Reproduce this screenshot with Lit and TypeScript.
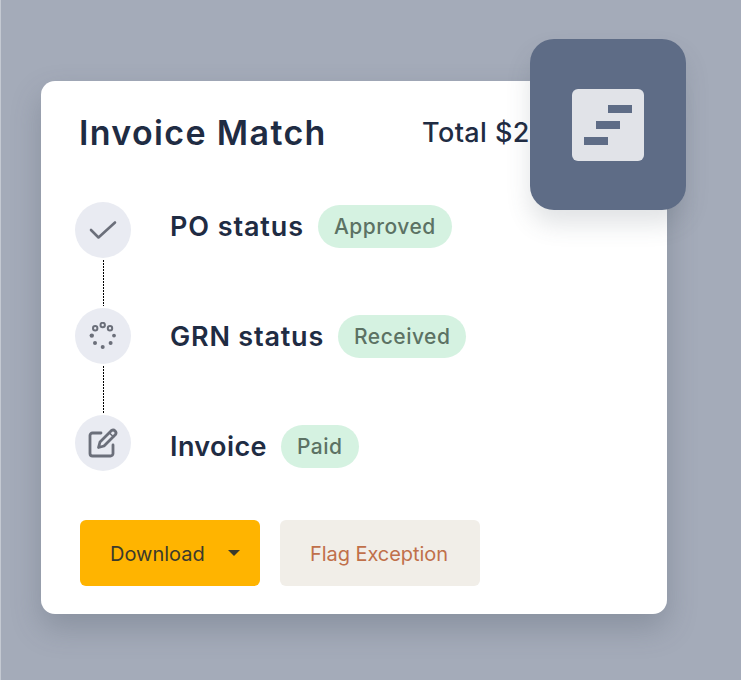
import { LitElement, html, css } from "lit";
import { customElement } from "lit/decorators.js";

@customElement("app-root")
export class AppRoot extends LitElement {
  static styles = css`
    :host { display: block; width: 741px; height: 680px; overflow: hidden; background: #a4abb9; font-family: "Inter", "Liberation Sans", sans-serif; box-sizing: border-box; border-left: 1px solid #c4c9d2; padding: 81px 0 0 40px; }
    .card { position: relative; box-sizing: border-box; width: 626px; height: 533px; background: #fff; border-radius: 14px; padding: 29px 38px 28px 38px; box-shadow: 0 14px 30px rgba(70, 78, 95, 0.28); display: flex; flex-direction: column; }
    .head { display: flex; align-items: center; height: 44px; white-space: nowrap; }
    h1 { margin: 0; font-size: 34px; font-weight: 600; color: #1f2c43; letter-spacing: 1.35px; width: 344px; }
    .total { font-size: 27px; font-weight: 500; color: #1f2c43; letter-spacing: 0.4px; margin-left: -1px; }
    .tile { position: absolute; left: 489px; top: -42px; width: 156px; height: 171px; border-radius: 24px; background: #5e6c86; box-shadow: 0 14px 24px rgba(70,78,95,.16); display: flex; align-items: center; justify-content: center; }
    .tile-inner { width: 72px; height: 72px; border-radius: 6px; background: #e1e3e8; display: block; }
    .body { display: flex; gap: 39px; margin: 48px 0 0 -4px; align-items: flex-start; }
    .rail { display: flex; flex-direction: column; width: 56px; }
    .link { display: flex; justify-content: center; height: 50px; }
    .link.b { height: 51px; }
    .link i { display: block; width: 1px; margin: 2px 0; background: repeating-linear-gradient(#000 0 1.6px, transparent 1.6px 3px); }
    .dot { flex: none; width: 56px; height: 56px; border-radius: 50%; background: #e9ebf2; display: flex; align-items: center; justify-content: center; }
    .list { display: flex; flex-direction: column; gap: 67px; margin-top: 3px; }
    .info { display: flex; align-items: center; gap: 14px; height: 43px; white-space: nowrap; }
    .label { font-size: 27px; font-weight: 600; color: #1f2c43; letter-spacing: 0.9px; }
    .label.mid { letter-spacing: 0.8px; }
    .label.tight { letter-spacing: 0.4px; }
    .badge { height: 43px; display: flex; align-items: center; padding: 0 16px; border-radius: 22px; background: #d5f2e1; color: #5c7264; font-size: 21px; font-weight: 500; letter-spacing: 0.5px; }
    .actions { display: flex; gap: 20px; margin: 49px 0 0 1px; }
    button { height: 66px; border: 0; border-radius: 6px; font-family: inherit; font-size: 20px; display: flex; align-items: center; padding: 0; padding-top: 2px; }
    .primary { width: 180px; background: #ffb400; color: #3b3a2c; padding-left: 30px; gap: 23px; }
    .caret { width: 0; height: 0; border-left: 6px solid transparent; border-right: 6px solid transparent; border-top: 6px solid #3b3a2c; margin-top: -3px; }
    .secondary { width: 200px; background: #f1eee8; color: #c0704a; justify-content: center; letter-spacing: -0.05px; padding-right: 2px; }
  `;

  render() {
    return html`
      <div class="card">
        <div class="head">
          <h1>Invoice Match</h1>
          <span class="total">Total $2</span>
        </div>
        <div class="tile">
          <svg class="tile-inner" viewBox="0 0 72 72">
            <rect x="36" y="16" width="24" height="8" fill="#5e6c86"/>
            <rect x="24" y="32" width="24" height="8" fill="#5e6c86"/>
            <rect x="12" y="48" width="24" height="8" fill="#5e6c86"/>
          </svg>
        </div>
        <div class="body">
          <div class="rail">
            <div class="dot">
              <svg width="30" height="30" viewBox="0 0 30 30" fill="none" stroke="#6b6f7a" stroke-width="2.6" stroke-linecap="round" stroke-linejoin="round"><path d="M3 15 10.5 22.5 27 7.5"/></svg>
            </div>
            <div class="link"><i></i></div>
            <div class="dot">
              <svg width="28" height="28" viewBox="0 0 28 28" fill="#6b6f7a">
                <circle cx="13.7" cy="3" r="2.2" fill="none" stroke="#6b6f7a" stroke-width="2"/>
                <circle cx="21" cy="6.2" r="2.2" fill="none" stroke="#6b6f7a" stroke-width="2"/>
                <circle cx="6.2" cy="6.2" r="2.2" fill="none" stroke="#6b6f7a" stroke-width="2"/>
                <circle cx="25" cy="13.6" r="1.9"/>
                <circle cx="2.8" cy="13.6" r="2.2"/>
                <circle cx="21.6" cy="21" r="2"/>
                <circle cx="6" cy="21" r="2"/>
                <circle cx="13.7" cy="25" r="2"/>
              </svg>
            </div>
            <div class="link b"><i></i></div>
            <div class="dot">
              <svg width="32" height="32" viewBox="0 0 32 32" fill="none" stroke="#6b6f7a" stroke-width="2.8" stroke-linecap="round" stroke-linejoin="round">
                <path d="M14 6H5.5A2.5 2.5 0 0 0 3 8.5V26.5A2.5 2.5 0 0 0 5.5 29H23.5A2.5 2.5 0 0 0 26 26.5V18"/>
                <path d="M24.5 3.5a2.9 2.9 0 0 1 4 4L17 19l-5.5 1.5L13 15z"/>
                <path d="M22.5 6 26.5 10" stroke-width="1.6"/>
              </svg>
            </div>
          </div>
          <div class="list">
            <div class="info"><span class="label">PO status</span><span class="badge">Approved</span></div>
            <div class="info"><span class="label mid">GRN status</span><span class="badge">Received</span></div>
            <div class="info"><span class="label tight">Invoice</span><span class="badge">Paid</span></div>
          </div>
        </div>
        <div class="actions">
          <button class="primary">Download<span class="caret"></span></button>
          <button class="secondary">Flag Exception</button>
        </div>
      </div>
    `;
  }
}
